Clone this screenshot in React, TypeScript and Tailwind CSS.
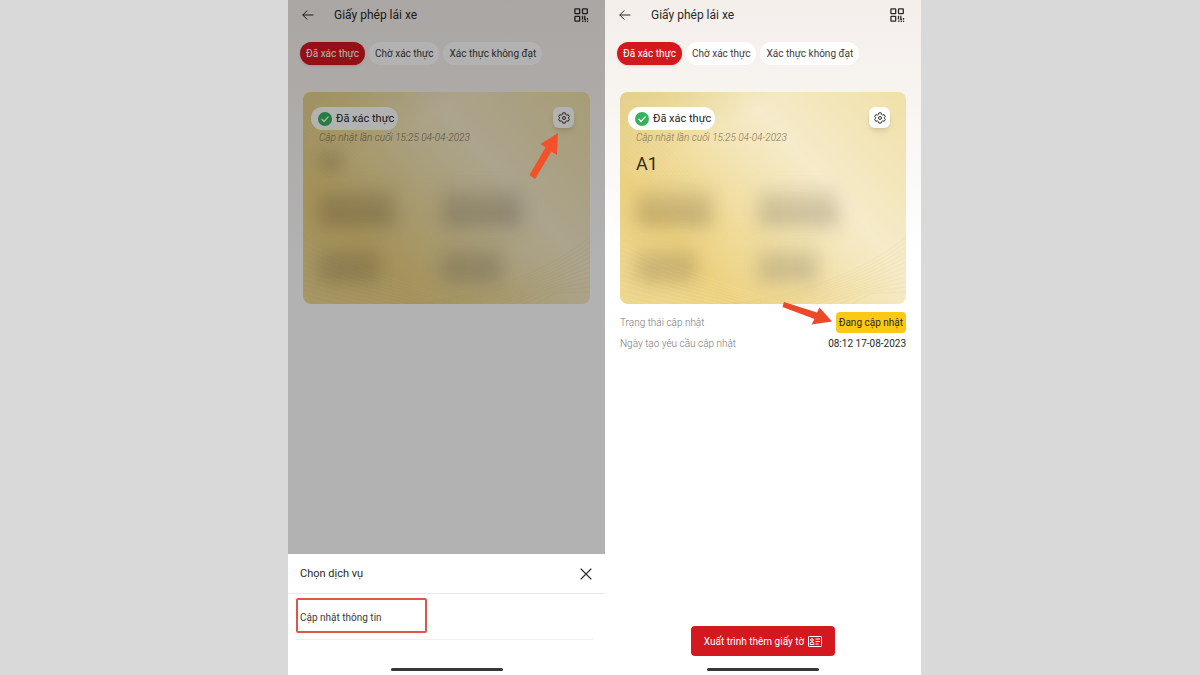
import type { ReactNode } from "react";

function BackIcon() {
  return (
    <svg viewBox="0 0 12 12" className="size-3" fill="none" stroke="currentColor" strokeWidth="1" strokeLinecap="round" strokeLinejoin="round">
      <path d="M11 6H1M5 1.8 0.8 6 5 10.2" />
    </svg>
  );
}

function QrIcon() {
  return (
    <svg viewBox="0 0 15 15" className="size-[15px]" fill="none" stroke="currentColor" strokeWidth="1.3">
      <rect x="0.9" y="0.8" width="4.8" height="4.8" rx="0.6" />
      <rect x="8.5" y="0.8" width="4.8" height="4.8" rx="0.6" />
      <rect x="0.9" y="8.4" width="4.8" height="4.8" rx="0.6" />
      <path d="M8.5 7.800v3.600M10.800 7.800v3.600h1.200M13.500 10v1.700M7.900 13.200h1.700M11.300 12.500v1.500M13.500 12.800v1.200" />
    </svg>
  );
}

function GearIcon() {
  return (
    <svg viewBox="0 0 24 24" className="size-3" fill="none" stroke="currentColor" strokeWidth="2" strokeLinejoin="round">
      <path d="M9.6 1.8h4.8l.8 3.2 2 1.2 3.2-.9 2.4 4.1-2.3 2.4v.4l2.3 2.4-2.4 4.1-3.2-.9-2 1.2-.8 3.2H9.6l-.8-3.2-2-1.2-3.2.9-2.4-4.1 2.3-2.4v-.4L1.2 9.4l2.4-4.1 3.2.9 2-1.2z" />
      <circle cx="12" cy="12" r="3" />
    </svg>
  );
}

function CheckBadge() {
  return (
    <svg viewBox="0 0 14 14" className="size-[14px] shrink-0">
      <circle cx="7" cy="7" r="7" fill="#34b45a" />
      <path d="M3.9 7.3 6 9.5l4.2-4.6" fill="none" stroke="#fff" strokeWidth="1.3" strokeLinecap="round" strokeLinejoin="round" />
    </svg>
  );
}

function IdCardIcon() {
  return (
    <svg viewBox="0 0 14 11" className="h-[11px] w-[14px]" fill="none" stroke="currentColor" strokeWidth="1">
      <rect x="0.5" y="0.5" width="13" height="10" rx="0.6" />
      <circle cx="4" cy="4" r="1.3" />
      <path d="M2.2 8.5V7.2c0-.7.5-1 1-1h1.6c.6 0 1 .3 1 1v1.3zM7.5 3h4.5M7.5 5.5H12M7.5 8h3" />
    </svg>
  );
}

function CardPattern() {
  const steps = [0, 1, 2, 3, 4, 5, 6, 7, 8, 9, 10, 11];
  return (
    <svg viewBox="0 0 286 212" preserveAspectRatio="none" className="absolute inset-0 size-full" fill="none" strokeWidth="0.8">
      {steps.map((i) => (
        <g key={i}>
          <path d={`M0 ${150 + i * 5}C50 ${175 + i * 4} 100 ${190 + i * 3} 165 ${212 + i * 2}`} stroke="#fff3c4" strokeOpacity="0.2" />
          <path d={`M${100 + i * 12} 212C${170 + i * 8} ${208 - i} 245 ${180 + i * 2} 286 ${145 + i * 5}`} stroke="#d9bd68" strokeOpacity="0.16" />
          <path d={`M0 ${20 + i * 4}C24 ${30 + i * 5} 44 ${50 + i * 4} 76 ${90 + i * 5}`} stroke="#d9bd68" strokeOpacity="0.1" />
        </g>
      ))}
    </svg>
  );
}

function LicenceCard({ grade }: { grade?: string }) {
  return (
    <section className="relative mx-[15px] mt-[27px] h-[212px] overflow-hidden rounded-lg bg-[linear-gradient(48deg,#eed88f_0%,#ecd180_24%,#f0dc9c_40%,#f4e6b9_55%,#f6ebca_66%,#f3e6ba_82%,#f0e0a8_100%)] px-2 pt-[15px]">
      <div className="absolute inset-0 bg-[linear-gradient(148deg,#e4d08c_0%,transparent_26%)]" />
      <CardPattern />
      <div className="relative">
        <div className="flex items-start justify-between pr-2">
          <p className="flex h-[23px] items-center gap-1 rounded-full bg-white pr-1 pl-[7px] text-[11px] text-[#25221f]">
            <CheckBadge />
            <span className="pt-px">Đã xác thực</span>
          </p>
          <button aria-label="Cài đặt" className="flex size-[21px] items-center justify-center rounded-md bg-white text-[#35332f] shadow-md">
            <GearIcon />
          </button>
        </div>
        <p className="pl-2 text-[10px] leading-4 font-light text-[#82745a] italic">Cập nhật lần cuối 15:25 04-04-2023</p>
        <div className="mt-1.5 h-6 pl-2 text-[18px] leading-6 text-[#342b1c]">
          {grade ?? <div className="h-5 w-6 bg-[#66593a]/20 blur-[7px]" />}
        </div>
        <div className="mt-3.5 grid grid-cols-[126fr_144fr] gap-y-6 pl-2">
          <div className="h-9 w-[76px] bg-linear-to-b from-[#85734c]/20 to-[#85734c]/45 blur-[9px]" />
          <div className="h-9 w-20 bg-linear-to-b from-[#89806b]/20 to-[#89806b]/45 blur-[9px]" />
          <div className="h-8 w-[60px] bg-linear-to-b from-[#85734c]/25 to-[#85734c]/40 blur-[9px]" />
          <div className="h-8 w-[60px] bg-linear-to-b from-[#89806b]/25 to-[#89806b]/40 blur-[9px]" />
        </div>
      </div>
    </section>
  );
}

function Screen({ grade, children }: { grade?: string; children: ReactNode }) {
  return (
    <main className="relative flex min-h-screen flex-col bg-white bg-[linear-gradient(180deg,#f4eeeb_0px,#f7f3ef_80px,#ffffff_260px)] text-[#2b2826]">
      <header className="flex h-[30px] items-center pr-4 pl-[14px]">
        <button aria-label="Quay lại"><BackIcon /></button>
        <h1 className="ml-5 flex-1 text-[12px]">Giấy phép lái xe</h1>
        <button aria-label="Mã QR"><QrIcon /></button>
      </header>
      <nav className="mt-3 flex gap-1 px-3 text-[10px] whitespace-nowrap text-[#3d3a38]">
        <button className="h-[23px] rounded-full bg-[#d31820] px-1.5 text-white shadow-sm">Đã xác thực</button>
        <button className="h-[23px] rounded-full bg-white px-1.5">Chờ xác thực</button>
        <button className="h-[23px] rounded-full bg-white px-1.5">Xác thực không đạt</button>
      </nav>
      <LicenceCard grade={grade} />
      {children}
    </main>
  );
}

function HomeBar() {
  return <div className="mx-auto h-[3px] w-28 rounded-full bg-[#373737]" />;
}

function ServiceSheet() {
  return (
    <div className="absolute inset-0 flex flex-col justify-end bg-black/30">
      <section className="flex h-[121px] flex-col bg-white pb-1">
        <header className="flex h-10 items-center justify-between border-b border-[#e9e9e9] pr-[13px] pl-3">
          <h2 className="pt-[2px] text-[11px]">Chọn dịch vụ</h2>
          <button aria-label="Đóng">
            <svg viewBox="0 0 12 12" className="size-3" stroke="currentColor" strokeWidth="1.1" strokeLinecap="round">
              <path d="m1 1 10 10M11 1 1 11" />
            </svg>
          </button>
        </header>
        <div className="mr-3 ml-2 border-b border-[#f0f0f0] pt-1 pb-[6px]">
          <button className="block h-[35px] w-[131px] rounded-xs border-2 border-[#dc5747] pt-[3px] pl-[2px] text-left text-[10px] text-[#3d3a38]">Cập nhật thông tin</button>
        </div>
        <div className="mt-auto"><HomeBar /></div>
      </section>
    </div>
  );
}

export default function App() {
  return (
    <div className="grid min-h-screen grid-cols-[288fr_317fr_316fr_279fr] bg-[#d9d9d9] font-['Roboto','Noto_Sans',sans-serif]">
      <div className="col-start-2">
        <Screen>
          <ServiceSheet />
          <svg viewBox="0 0 30 48" className="absolute top-[132px] right-[46px] h-12 w-[30px]" fill="#f4512b">
            <path d="M29 1 28 23 22.5 19.5 6 47 0.5 43 16.5 15.5 11.5 12z" />
          </svg>
        </Screen>
      </div>
      <Screen grade="A1">
        <dl className="mx-[15px] mt-2 flex flex-col gap-[3px] text-[10px] leading-4">
          <div className="flex items-center justify-between">
            <dt className="font-light text-[#777]">Trạng thái cập nhật</dt>
            <dd className="rounded-sm bg-[#fac915] px-[3px] pt-[3px] pb-[2px]">Đang cập nhật</dd>
          </div>
          <div className="flex items-center justify-between">
            <dt className="font-light text-[#777]">Ngày tạo yêu cầu cập nhật</dt>
            <dd>08:12 17-08-2023</dd>
          </div>
        </dl>
        <svg viewBox="0 0 51 24" className="absolute top-[301px] right-[88px] h-6 w-[51px]" fill="#e84a2a">
          <path d="M2 1 35 11.5 37.5 6.5 50 20.5 29.5 23.5 32.5 18 0.5 6z" />
        </svg>
        <div className="mt-auto flex flex-col items-center gap-3 pb-1">
          <button className="flex h-[30px] items-center gap-1 rounded-sm bg-[#d31820] px-[13px] text-[10px] whitespace-nowrap text-white">
            Xuất trình thêm giấy tờ
            <IdCardIcon />
          </button>
          <HomeBar />
        </div>
      </Screen>
    </div>
  );
}
